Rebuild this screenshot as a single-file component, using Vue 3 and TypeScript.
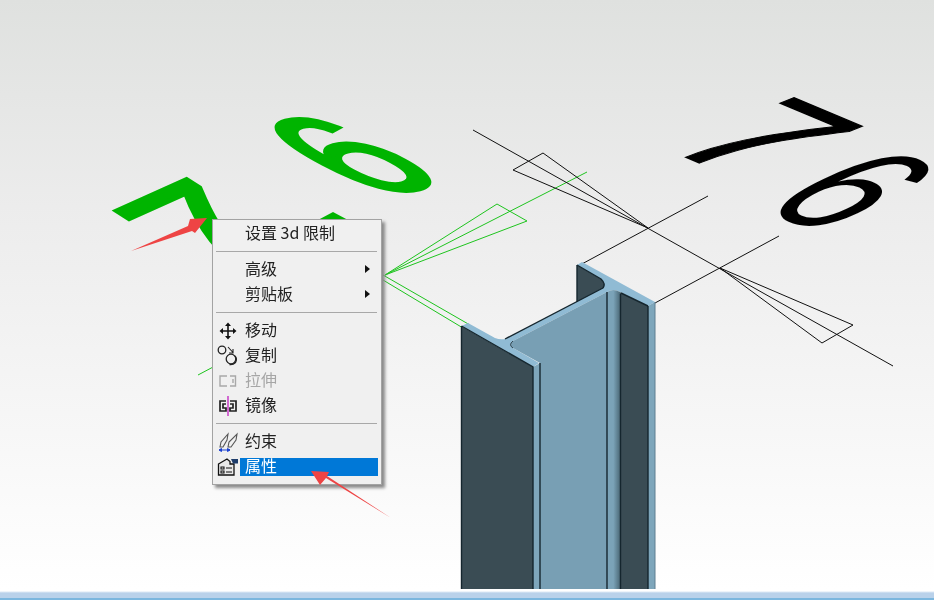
<script setup lang="ts">
type Row =
	| { kind: 'sep' }
	| { kind: 'item'; label: string; icon?: string; sub?: boolean; disabled?: boolean; active?: boolean }

const rows: Row[] = [
	{ kind: 'item', label: '设置 3d 限制' },
	{ kind: 'sep' },
	{ kind: 'item', label: '高级', sub: true },
	{ kind: 'item', label: '剪贴板', sub: true },
	{ kind: 'sep' },
	{ kind: 'item', label: '移动', icon: 'move' },
	{ kind: 'item', label: '复制', icon: 'copy' },
	{ kind: 'item', label: '拉伸', icon: 'stretch', disabled: true },
	{ kind: 'item', label: '镜像', icon: 'mirror' },
	{ kind: 'sep' },
	{ kind: 'item', label: '约束', icon: 'constraint' },
	{ kind: 'item', label: '属性', icon: 'props', active: true },
]
</script>

<template>
	<div class="page">
		<div class="viewport">
			<svg class="scene" width="934" height="589" viewBox="0 0 934 589">
				<defs>
					<linearGradient id="fillet" x1="0" y1="0" x2="1" y2="0">
						<stop offset="0" stop-color="#7ba3b8" />
						<stop offset=".45" stop-color="#7ba3b8" />
						<stop offset="1" stop-color="#46626f" />
					</linearGradient>
				</defs>

				<!-- green dimension -->
				<g class="green-lines">
					<path d="M198 375L232 357" />
					<path d="M385 275L587 172" />
					<path d="M385 275L497 204L527 221Z" />
					<path d="M383 275L470 325" />
					<path d="M383 280L463 328" />
				</g>
				<text class="digit green" transform="matrix(1.55 -.7 1.65 1.05 222 287)">7</text>
				<text class="digit green" transform="matrix(1.3 -.35 1.85 .98 378 199)">6</text>
				<path class="green-fill" d="M333 212L318 220L348 220Z" />

				<!-- black dimension -->
				<g class="black-lines">
					<path d="M473 130L893 366" />
					<path d="M708 196L580 265" />
					<path d="M779 236L655 303" />
					<path d="M648 228L543 153L513 170Z" />
					<path d="M720 268L853 325L822 343Z" />
				</g>
				<text class="digit black" transform="matrix(1.5 .63 -1.85 .75 659 146)">7</text>
				<text class="digit black six" transform="matrix(1.15 .55 -1.85 .88 757 205)">6</text>

				<!-- beam -->
				<path class="dark" d="M577 265L577 302L603 289Q606 284 601 279Z" />
				<path class="dark" d="M620 292L648 306L648 589L620 589Z" />
				<path class="dark" d="M461 326L533 367L533 589L461 589Z" />
				<path class="top" d="M461.5 326L468 323L495 338Q500 340 505 339L603 288Q606 284 601 279L577 265L582 262L655 302L648 306L620 292Q613 288 607 292L513 341Q508 345 513 348L539 363L533 367Z" />
				<path class="web" d="M513 341L607 292L607 589L540 589L540 363L513 348Q508 345 513 341Z" />
				<path class="flange-end" d="M533 367L540 363L540 589L533 589Z" />
				<path class="flange-end" d="M648 306L655 302L655 589L648 589Z" />
				<path class="fillet" d="M607 292Q613 288 620 292L621 589L607 589Z" />
				<g class="beam-lines">
					<path d="M461.5 326L533 367L533 589" />
					<path d="M461.5 326L461.5 589" />
					<path d="M540 363L540 589" />
					<path d="M607 292L607 589" />
					<path d="M620.5 294L620.5 589" />
					<path d="M648 306L648 589" />
					<path d="M577 265L601 279Q606 284 603 288" />
					<path d="M577 265L577 302" />
					<path d="M505 339L603 288" />
					<path d="M621 293L648 306" />
					<path class="thin" d="M513 341Q508 345 513 348" />
				</g>
				<path class="edge" d="M655 302L655 589" />
			</svg>

			<div class="menu">
				<template v-for="(row, i) in rows" :key="i">
					<div v-if="row.kind === 'sep'" class="sep"></div>
					<div v-else class="item" :class="{ disabled: row.disabled, active: row.active }">
						<span class="icon">
							<svg v-if="row.icon === 'move'" width="18" height="18" viewBox="0 0 18 18">
								<path d="M9 2.5V15.5M2.5 9H15.5" stroke="#111" stroke-width="1.6" fill="none" />
								<path d="M9 .5L12 4H6ZM9 17.5L6 14H12ZM.5 9L4 6V12ZM17.5 9L14 12V6Z" fill="#111" />
							</svg>
							<svg v-else-if="row.icon === 'copy'" width="22" height="22" viewBox="0 0 22 22">
								<g fill="none" stroke="#222" stroke-width="1.3">
									<circle cx="5" cy="5" r="3.8" />
									<circle cx="14" cy="14" r="4.8" />
									<path d="M18 11Q20.5 14 18.5 17.5Q16 20 12.5 19.5" />
								</g>
								<path d="M11 2L16 7.5M16 4V8H12" stroke="#222" stroke-width="1.1" fill="none" />
							</svg>
							<svg v-else-if="row.icon === 'stretch'" width="20" height="14" viewBox="0 0 20 14">
								<path d="M9 2H2V12H9M12 2H17.5V12H12M15 5V9" fill="none" stroke="#a8a8a8" stroke-width="1.4" />
							</svg>
							<svg v-else-if="row.icon === 'mirror'" width="20" height="20" viewBox="0 0 20 20">
								<path d="M8 5H2V15H8V12H5V8H8M12 5H18V15H12V12H15V8H12" fill="none" stroke="#222" stroke-width="1.7" />
								<path d="M10 0V20" stroke="#c020c0" stroke-width="1.3" />
							</svg>
							<svg v-else-if="row.icon === 'constraint'" width="20" height="20" viewBox="0 0 20 20">
								<g fill="none" stroke="#555" stroke-width="1.1">
									<path d="M2 15L3 10L10 2L9 8L5 15Z" />
									<path d="M10 15L11 10L19 2L18 8L13 15Z" />
								</g>
								<path d="M1 18H12M1 18L3.5 16.5V19.5ZM12 18L9.5 16.5V19.5Z" stroke="#1a40d0" stroke-width="1" fill="#1a40d0" />
							</svg>
							<svg v-else-if="row.icon === 'props'" width="22" height="20" viewBox="0 0 22 20">
								<path d="M1.5 7L10 2L13 4.5V7H17V18H1.5Z" fill="#e8e8e8" stroke="#111" stroke-width="1.3" />
								<path d="M4 10H7V12H4ZM4 14H7V16H4ZM9 11H15M9 15H15" stroke="#111" stroke-width="1.1" fill="none" />
								<path d="M14 2H21V6.5H16Z" fill="#1d3c6a" />
							</svg>
						</span>
						<span class="label">{{ row.label }}</span>
						<span v-if="row.sub" class="arrow"></span>
					</div>
				</template>
			</div>

			<svg class="notes" width="934" height="589" viewBox="0 0 934 589">
				<path class="red" d="M131 251L188 226L190 219L207 218L195 233L192 231Z" />
				<path class="red" d="M391 518L326 478L320 485L311 471L329 472L327 476Z" />
			</svg>
		</div>
		<div class="strip"></div>
	</div>
</template>

<style scoped>
	.page {
		width: 934px;
		height: 600px;
		display: flex;
		flex-direction: column;
		overflow: hidden;
		font-family: "Noto Sans CJK SC", "Noto Sans", sans-serif;
	}
	.viewport {
		position: relative;
		height: 589px;
		flex: none;
		background: linear-gradient(#dfe1df 0%, #ececec 35%, #f6f6f6 70%, #fff 100%);
	}
	.scene,
	.notes {
		position: absolute;
		top: 0;
		left: 0;
	}
	.notes {
		pointer-events: none;
	}
	.digit {
		font-family: "Liberation Sans", sans-serif;
		font-size: 100px;
	}
	.digit.green {
		fill: #00b400;
		stroke: #00b400;
		stroke-width: 3px;
	}
	.digit.black {
		fill: #000;
		stroke: #000;
		stroke-width: 1px;
	}
	.digit.black.six {
		stroke-width: 0;
	}
	.green-fill {
		fill: #00b400;
	}
	.green-lines path {
		fill: none;
		stroke: #1ec41e;
		stroke-width: 1;
	}
	.black-lines path {
		fill: none;
		stroke: #111;
		stroke-width: 1;
	}
	.dark {
		fill: #3a4c54;
	}
	.top {
		fill: #90bbd4;
	}
	.web {
		fill: #789fb4;
	}
	.flange-end {
		fill: #7ea6bb;
	}
	.fillet {
		fill: url(#fillet);
	}
	.beam-lines path {
		fill: none;
		stroke: #15262e;
		stroke-width: 1.4;
	}
	.beam-lines path.thin {
		stroke-width: .8;
	}
	.edge {
		stroke: #5f7f90;
		stroke-width: 1;
	}
	.red {
		fill: #ee4444;
	}
	.menu {
		position: absolute;
		left: 212px;
		top: 219px;
		width: 170px;
		height: 266px;
		box-sizing: border-box;
		padding: 1px 3px 1px 2px;
		background: #f0f0f0;
		border: 1px solid #a3a3a3;
		box-shadow: 3px 3px 3px #8a8a8a;
		filter: blur(.3px);
	}
	.item {
		display: flex;
		align-items: center;
		height: 25px;
		position: relative;
		font-size: 16px;
		color: #222;
	}
	.icon {
		width: 25px;
		flex: none;
		display: flex;
		justify-content: center;
		align-items: center;
	}
	.label {
		flex: 1;
		height: 18px;
		line-height: 15px;
		padding-left: 5px;
		white-space: pre;
	}
	.item.disabled .label {
		color: #a6a6a6;
	}
	.item.active .label {
		background: #0078d7;
		color: #fff;
	}
	.arrow {
		position: absolute;
		right: 8px;
		top: 8px;
		border-left: 5px solid #111;
		border-top: 4.5px solid transparent;
		border-bottom: 4.5px solid transparent;
	}
	.sep {
		height: 11px;
		display: flex;
		align-items: center;
		padding: 0 1px;
	}
	.sep::before {
		content: "";
		flex: 1;
		height: 1px;
		background: #a8a8a8;
	}
	.strip {
		flex: 1;
		background: linear-gradient(#fff 0, #fff 2px, #b9d1ea 4px, #b9d1ea 9px, #7bb6de 9px);
	}
</style>
